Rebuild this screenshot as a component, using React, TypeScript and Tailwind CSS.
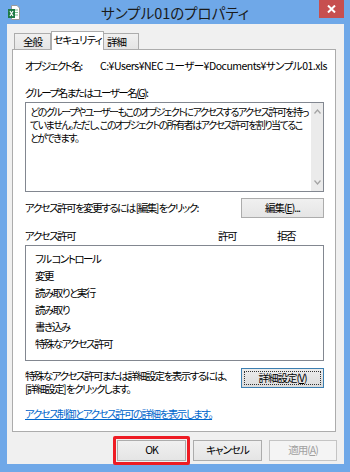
import React from "react";

const F = "font-['Noto_Sans_CJK_JP',sans-serif] [font-feature-settings:'palt']";

function Btn({ children, className = "" }: { children: React.ReactNode; className?: string }) {
  return (
    <div
      className={
        "flex shrink-0 items-center justify-center whitespace-nowrap border border-[#acacac] bg-gradient-to-b from-[#f0f0f0] to-[#e5e5e5] text-[10.5px] leading-none tracking-[-1px] text-black " +
        className
      }
    >
      {children}
    </div>
  );
}

export default function App() {
  return (
    <div className={`relative h-[472px] w-[350px] overflow-hidden bg-[#6fa8e8] ${F}`}>
      {/* title bar */}
      <div className="relative h-[24px] w-full">
        <svg className="absolute left-[8px] top-[5px]" width="12" height="15" viewBox="0 0 12 15">
          <path d="M3.5 0.5H9L11.5 3V14.5H3.5Z" fill="#fff" stroke="#9a9a9a" />
          <path d="M6 5H10M6 7.5H10M6 10H10" stroke="#7cc08f" strokeWidth="1" />
          <rect x="0" y="4" width="7" height="9" fill="#1e7a45" />
          <path d="M2 6L5 11M5 6L2 11" stroke="#fff" strokeWidth="1.2" />
        </svg>
        <div className="absolute inset-x-0 top-[4px] text-center text-[14.5px] leading-[18px] text-[#1a1a1a]">
          サンプル01のプロパティ
        </div>
        <div className="absolute left-[319px] top-0 flex h-[18px] w-[25px] items-center justify-center bg-[#c74f4f]">
          <svg width="9" height="8" viewBox="0 0 9 8">
            <path d="M1 0.5L8 7.5M8 0.5L1 7.5" stroke="#fff" strokeWidth="2" />
          </svg>
        </div>
      </div>

      {/* client */}
      <div className="ml-[7px] h-[440px] w-[337px] bg-[#f0f0f0] pl-[5px] pt-[7px]">
        {/* tabs */}
        <div className="relative z-10 flex h-[18px] items-end whitespace-nowrap pl-[2px] text-[10.5px] leading-none tracking-[-1px] text-black">
          <div className="flex h-[16px] w-[37px] items-center justify-center border border-b-0 border-[#acacac] bg-gradient-to-b from-[#f0f0f0] to-[#e5e5e5] pt-[1px]">
            全般
          </div>
          <div className="flex h-[19px] w-[53px] translate-y-[1px] items-center justify-center border border-b-0 border-[#acacac] bg-white pb-[1px]">
            セキュリティ
          </div>
          <div className="flex h-[16px] w-[35px] items-center justify-start border border-b-0 border-l-0 border-[#acacac] bg-gradient-to-b from-[#f0f0f0] to-[#e5e5e5] pl-[3px] pt-[1px]">
            詳細
          </div>
        </div>

        {/* panel */}
        <div className="h-[383px] w-[324px] border border-[#acacac] bg-white pl-[12px] pr-[11px] pt-[9px] text-[10.5px] leading-[14px] tracking-[-1.5px] text-black">
          <div className="flex h-[14px] items-center whitespace-nowrap">
            <div className="w-[75px] shrink-0">オブジェクト名:</div>
            <div className="tracking-[-0.5px]">C:¥Users¥NEC ユーザー¥Documents¥サンプル01.xls</div>
          </div>

          <div className="mt-[13px] h-[14px] whitespace-nowrap">
            グループ名またはユーザー名(<span className="underline">G</span>):
          </div>

          <div className="mt-[2px] flex h-[90px] border border-[#828790] bg-white">
            <div className="flex-1 overflow-hidden whitespace-nowrap pl-[4px] pt-[2px] text-[10px] leading-[13px] tracking-[-1.5px]">
              <div>どのグループやユーザーもこのオブジェクトにアクセスするアクセス許可を持っ</div>
              <div>ていません。ただし、このオブジェクトの所有者はアクセス許可を割り当てるこ</div>
              <div>とができます。</div>
            </div>
            <div className="flex w-[12px] shrink-0 flex-col items-center justify-between bg-[#ebebeb] py-[6px]">
              <svg width="7" height="5" viewBox="0 0 7 5">
                <path d="M0.5 4.5L3.5 1L6.5 4.5" fill="none" stroke="#a3a3a3" strokeWidth="1.2" />
              </svg>
              <svg width="7" height="5" viewBox="0 0 7 5">
                <path d="M0.5 0.5L3.5 4L6.5 0.5" fill="none" stroke="#a3a3a3" strokeWidth="1.2" />
              </svg>
            </div>
          </div>

          <div className="mt-[6px] flex h-[20px] items-center justify-between">
            <div className="whitespace-nowrap">アクセス許可を変更するには [編集] をクリック:</div>
            <Btn className="h-[20px] w-[83px]">
              編集(<span className="underline">E</span>)...
            </Btn>
          </div>

          <div className="mt-[11px] flex h-[14px] items-center whitespace-nowrap">
            <div className="w-[193px] shrink-0">アクセス許可</div>
            <div className="w-[59px] shrink-0">許可</div>
            <div>拒否</div>
          </div>

          <div className="mt-[2px] h-[116px] border border-[#828790] bg-white pl-[9px] pt-[4px]">
            {["フル コントロール", "変更", "読み取りと実行", "読み取り", "書き込み", "特殊なアクセス許可"].map((t) => (
              <div key={t} className="flex h-[17px] items-center whitespace-nowrap">
                {t}
              </div>
            ))}
          </div>

          <div className="mt-[7px] flex items-start justify-between">
            <div className="whitespace-nowrap pt-[1px] leading-[13px]">
              <div>特殊なアクセス許可または詳細設定を表示するには、</div>
              <div>[詳細設定] をクリックします。</div>
            </div>
            <div className="relative flex h-[20px] w-[83px] shrink-0 items-center justify-center whitespace-nowrap border border-[#3c7fb1] bg-gradient-to-b from-[#ececec] to-[#dcdcdc] text-[10.5px] leading-none tracking-[-1px]">
              <div className="absolute inset-[2px] border border-dotted border-[#333]" />
              詳細設定(<span className="underline">V</span>)
            </div>
          </div>

          <div className="mt-[12px] whitespace-nowrap text-[#0066cc] underline">
            アクセス制御とアクセス許可の詳細を表示します。
          </div>
        </div>

        {/* bottom buttons */}
        <div className="mt-[8px] flex w-[325px] justify-end gap-[7px]">
          <div className="relative">
            <div className="absolute -inset-[4px] rounded-[2px] border-[3px] border-[#ee1c24]" />
            <Btn className="h-[21px] w-[69px]">OK</Btn>
          </div>
          <Btn className="h-[21px] w-[69px]">キャンセル</Btn>
          <div className="flex h-[21px] w-[68px] items-center justify-center whitespace-nowrap border border-[#c4c4c4] bg-[#f4f4f4] text-[10.5px] leading-none tracking-[-1px] text-[#a0a0a0]">
            適用(<span className="underline">A</span>)
          </div>
        </div>
      </div>
    </div>
  );
}
